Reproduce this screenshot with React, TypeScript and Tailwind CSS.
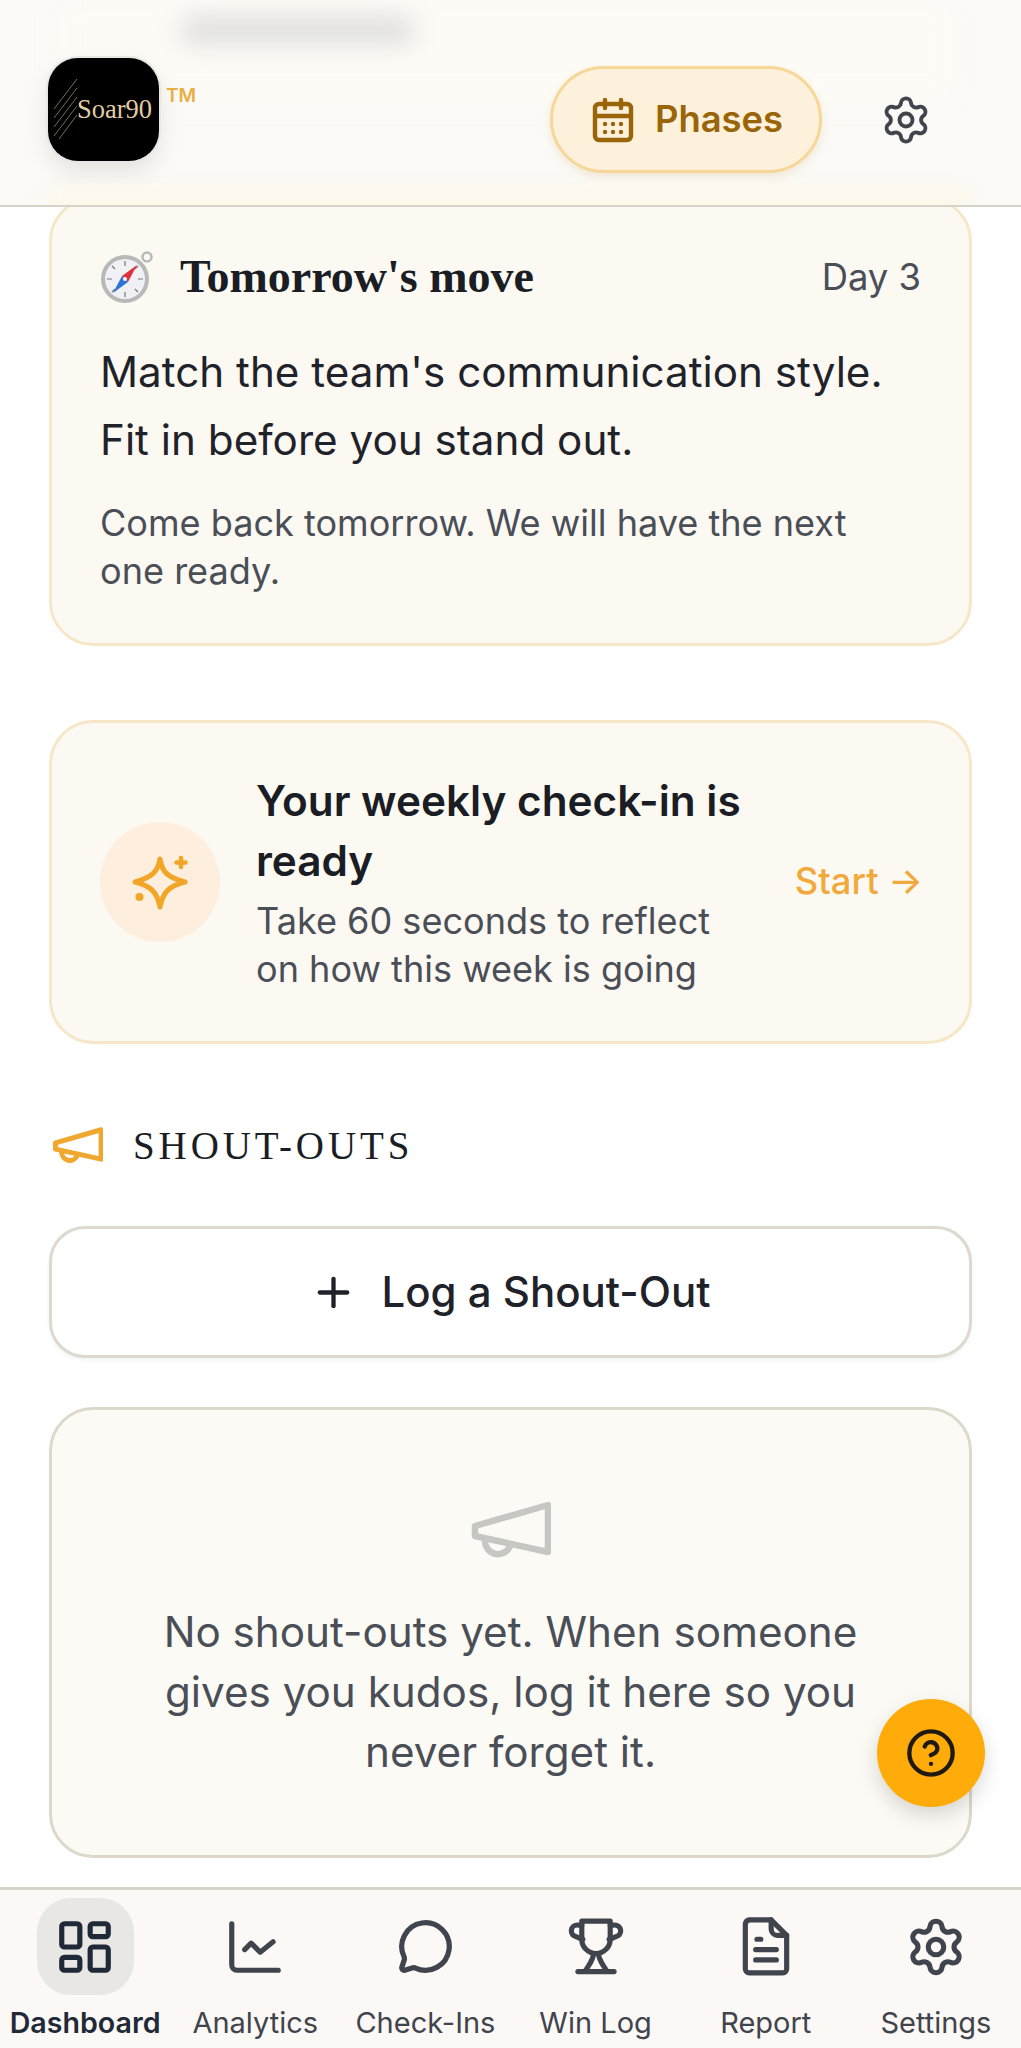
import React from 'react';
import { CalendarDays, CircleHelp, LayoutDashboard, MessageCircle, Plus, Settings } from 'lucide-react';

function Megaphone({ className, weight }: { className: string; weight: number }) {
  return (
    <svg viewBox="0 0 80 60" fill="none" stroke="currentColor" strokeWidth={weight} strokeLinejoin="round" strokeLinecap="round" className={className}>
      <path d="M77 4 4 25v10l73 16z" />
      <path d="M14 39a13 13 0 0 0 25 6" />
    </svg>
  );
}

function Sparkles() {
  return (
    <svg viewBox="0 0 56 56" className="h-[56px] w-[56px] text-[#f2a526]" fill="none" stroke="currentColor" strokeWidth="5" strokeLinejoin="round" strokeLinecap="round">
      <path d="M28 5c2 12 6 18 25 23-16 4-22 10-25 25-3-15-9-21-25-25 18-5 23-11 25-23z" />
      <path d="M49 4v9M44.500 8.500h9" strokeWidth="4.500" />
      <circle cx="7.500" cy="43" r="4" fill="currentColor" stroke="none" />
    </svg>
  );
}

function Compass() {
  return (
    <svg viewBox="0 0 54 54" className="h-[54px] w-[54px] shrink-0">
      <circle cx="47" cy="7" r="4.500" fill="none" stroke="#b9b9b9" strokeWidth="2.500" />
      <circle cx="25" cy="29" r="24" fill="#b8b8b8" />
      <circle cx="25" cy="29" r="20" fill="#f0f0f5" />
      <path d="M25 11v5M25 42v5M7 29h5M38 29h5M12 16l3 3M35 39l3 3M38 16l-3 3M12 42l3-3" stroke="#777" strokeWidth="1.200" />
      <path d="M37 15 22 26l6 6z" fill="#e0313f" />
      <path d="M13 43l15-11-6-6z" fill="#2b74d8" />
      <circle cx="25" cy="29" r="2" fill="#fff" />
    </svg>
  );
}

function Logo() {
  return (
    <div className="flex h-[103px] w-[111px] items-center overflow-hidden rounded-[30px] bg-black pl-[5px] shadow-[0_0_0_2px_#e9e7e3,0_10px_24px_rgba(0,0,0,0.1)]">
      <svg viewBox="0 0 26 62" className="h-[62px] w-[26px] shrink-0 text-[#9b8a70]" stroke="currentColor" strokeWidth="0.8">
        <path d="M1 30 24 0M1 39 24 9M1 48 24 18M1 57 24 27M6 60 24 36" />
      </svg>
      <span className="-ml-[2px] font-['Liberation_Serif',serif] text-[26.500px] leading-none text-[#e2cda6]">Soar90</span>
    </div>
  );
}

function ChartIcon() {
  return (
    <svg viewBox="0 0 24 24" className="h-[62px] w-[62px]" fill="none" stroke="currentColor" strokeWidth="2" strokeLinecap="round" strokeLinejoin="round">
      <path d="M3 3v16a2 2 0 0 0 2 2h16" />
      <path d="m8 13 2.500-2.500 3.500 3.500 5-4" />
    </svg>
  );
}

function TrophyIcon() {
  return (
    <svg viewBox="0 0 24 24" className="h-[62px] w-[62px]" fill="none" stroke="currentColor" strokeWidth="2" strokeLinecap="round" strokeLinejoin="round">
      <path d="M6.500 2h11v7a5.500 5.500 0 0 1-11 0z" />
      <path d="M6.500 3.500H5a2.300 2.300 0 0 0-.5 4.600l2.400 1M17.500 3.500H19a2.300 2.300 0 0 1 .5 4.600l-2.400 1" />
      <path d="M11 14.500c0 2.500-1.500 4-3 6.500M13 14.500c0 2.500 1.500 4 3 6.500" />
      <path d="M5 21.500h14" />
    </svg>
  );
}

function ReportIcon() {
  return (
    <svg viewBox="0 0 24 24" className="h-[62px] w-[62px]" fill="none" stroke="currentColor" strokeWidth="2" strokeLinecap="round" strokeLinejoin="round">
      <path d="M5.500 1.500H14l6 6v13a1.500 1.500 0 0 1-1.500 1.500h-13A1.500 1.500 0 0 1 4 20.500v-17a2 2 0 0 1 1.500-2z" />
      <path d="M14 1.500V5a2.500 2.500 0 0 0 2.500 2.500H20" />
      <path d="M8.500 9h1.500M8 13h8M8 17h8" />
    </svg>
  );
}

const navItems = [
  { label: 'Dashboard', icon: <LayoutDashboard className="h-[62px] w-[62px]" strokeWidth={2} />, active: true },
  { label: 'Analytics', icon: <ChartIcon /> },
  { label: 'Check-Ins', icon: <MessageCircle className="h-[57px] w-[57px]" strokeWidth={2.200} /> },
  { label: 'Win Log', icon: <TrophyIcon /> },
  { label: 'Report', icon: <ReportIcon /> },
  { label: 'Settings', icon: <Settings className="h-[62px] w-[62px]" strokeWidth={2} /> },
];

export default function App() {
  return (
    <div className="relative flex h-[2048px] w-[1021px] flex-col overflow-hidden bg-white font-['Inter',sans-serif] text-[#1f2329]">
      {/* Header */}
      <header className="relative z-10 flex h-[207px] shrink-0 items-start justify-between overflow-hidden border-b-[2px] border-[#d6d3cb] bg-[#fbfaf7] pl-[48px] pr-[89px]">
        {/* what scrolled under the frosted bar */}
        <div className="absolute left-[60px] right-[60px] top-0 h-[100px] bg-[#fdfbf5] blur-[12px]" />
        <div className="absolute left-[180px] top-[16px] h-[28px] w-[235px] rounded-full bg-[#dededc] blur-[12px]" />
        <div className="absolute bottom-[-14px] left-[49px] right-[49px] h-[34px] bg-[#fdf8ec] blur-[8px]" />

        <div className="relative mt-[58px] flex items-start gap-[7px]">
          <Logo />
          <span className="mt-[28px] text-[19px] font-semibold leading-none text-[#e9ae44]">TM</span>
        </div>

        <div className="relative mt-[66px] flex items-center gap-[58px]">
          <div className="flex h-[107px] w-[272px] items-center justify-center gap-[18px] rounded-full border-[3px] border-[#f6d797] bg-[#fdf1dc] text-[#9a6409] shadow-[0_4px_10px_rgba(200,150,60,0.18)]">
            <CalendarDays className="h-[48px] w-[48px]" strokeWidth={2.200} />
            <span className="text-[36.400px] font-semibold leading-none">Phases</span>
          </div>
          <Settings className="h-[52px] w-[52px] text-[#3f444d]" strokeWidth={1.800} />
        </div>
      </header>

      {/* Main */}
      <main className="min-h-0 flex-1 overflow-hidden px-[49px]">
        <section className="-mt-[10px] h-[449px] rounded-[44px] border-[3px] border-[#f6e7c8] bg-[#fcf9f3] px-[48px] pt-[50px]">
          <div className="flex items-center justify-between">
            <div className="flex items-center gap-[26px]">
              <Compass />
              <h2 className="font-['Liberation_Serif',serif] text-[46px] font-bold leading-none text-[#1a1d24]">Tomorrow's move</h2>
            </div>
            <span className="text-[36.400px] leading-none text-[#4a4e56]">Day 3</span>
          </div>
          <p className="mt-[34px] text-[42.200px] leading-[68px]">Match the team's communication style. Fit in before you stand out.</p>
          <p className="mt-[25px] pr-[40px] text-[36.100px] leading-[48px] text-[#4a4e56]">Come back tomorrow. We will have the next one ready.</p>
        </section>

        <section className="mt-[74px] flex h-[324px] items-center rounded-[44px] border-[3px] border-[#f6e7c8] bg-[#fcf9f3] pl-[48px] pr-[46px]">
          <div className="flex h-[120px] w-[120px] shrink-0 items-center justify-center rounded-full bg-[#fdeedd]">
            <Sparkles />
          </div>
          <div className="ml-[36px] w-[500px]">
            <h3 className="-mt-[1px] text-[42.300px] font-semibold leading-[60px] text-[#1a1d24]">Your weekly check-in is ready</h3>
            <p className="mt-[6px] text-[36.100px] leading-[48px] text-[#4a4e56]">Take 60 seconds to reflect on how this week is going</p>
          </div>
          <span className="ml-auto -mt-[2px] text-[36.400px] font-medium leading-none text-[#f2a93b]">Start →</span>
        </section>

        <div className="mt-[82px] flex items-center gap-[30px] pl-[4px]">
          <Megaphone className="h-[38px] w-[50px] text-[#efa82f]" weight={8} />
          <h3 className="font-['Liberation_Serif',serif] text-[39px] leading-none tracking-[0.1em] text-[#1a1d24]">SHOUT-OUTS</h3>
        </div>

        <button className="mt-[61px] flex h-[132px] w-full items-center justify-center gap-[24px] rounded-[36px] border-[3px] border-[#dcd9cf] bg-white text-[42px] font-medium shadow-[0_2px_4px_rgba(0,0,0,0.05)]">
          <Plus className="h-[47px] w-[47px]" strokeWidth={2.200} />
          <span className="-mt-[2px]">Log a Shout-Out</span>
        </button>

        <section className="mt-[49px] flex h-[451px] flex-col items-center rounded-[44px] border-[3px] border-[#dcd8ca] bg-[#fcfaf4] pt-[91px] text-center">
          <Megaphone className="h-[60px] w-[80px] text-[#c6c6c3]" weight={6.500} />
          <p className="mt-[41px] w-[780px] text-[42.200px] leading-[60px] text-[#4a4e56]">No shout-outs yet. When someone gives you kudos, log it here so you never forget it.</p>
        </section>
      </main>

      {/* Help button */}
      <button className="absolute left-[877px] top-[1699px] z-20 flex h-[108px] w-[108px] items-center justify-center rounded-full bg-[#ffab0a] text-[#1f1a10] shadow-[0_8px_20px_rgba(0,0,0,0.15)]">
        <CircleHelp className="h-[52px] w-[52px]" strokeWidth={2} />
      </button>

      {/* Bottom nav */}
      <nav className="grid h-[161px] shrink-0 grid-cols-6 border-t-[3px] border-[#d6d3cb] bg-[#fbf8f5] text-[#3f444d]">
        {navItems.map((item) => (
          <div key={item.label} className="flex flex-col items-center pt-[8px]">
            <div className={`flex h-[97px] w-[97px] items-center justify-center rounded-[34px] ${item.active ? 'bg-[#e8e7e4] text-[#1f2937]' : ''}`}>
              {item.icon}
            </div>
            <span className={`mt-[8px] whitespace-nowrap leading-[40px] ${item.active ? 'text-[28.600px] font-semibold text-[#1f2937]' : 'text-[29px]'}`}>{item.label}</span>
          </div>
        ))}
      </nav>
    </div>
  );
}
